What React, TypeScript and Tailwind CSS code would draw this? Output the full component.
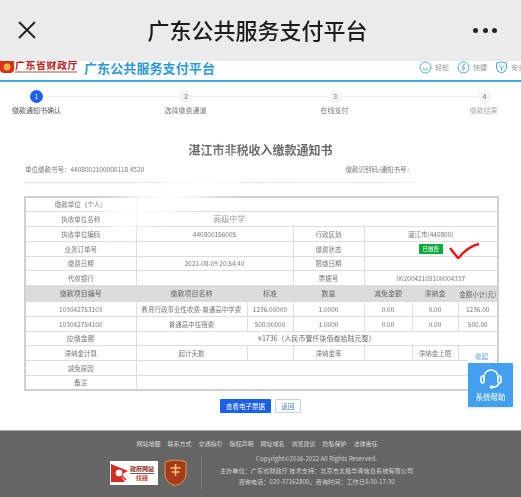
import React from "react";

const cjk = { fontFamily: '"Noto Sans CJK SC", "Liberation Sans", sans-serif' };

const td = "border border-[#dedede] p-0 text-center align-middle font-normal";

function Step({ n, active }: { n: number; active?: boolean }) {
  return (
    <div
      className={
        active
          ? "flex h-[13px] w-[13px] shrink-0 items-center justify-center rounded-full bg-[#1d63ea] text-[6px] text-white"
          : "flex h-[13px] w-[13px] shrink-0 items-center justify-center rounded-full bg-[#f4f4f4] text-[7px] text-[#777]"
      }
    >
      {n}
    </div>
  );
}

function Line() {
  return <div className="h-px flex-1 bg-[#f0f0f0]" />;
}

function Perk({ icon, label }: { icon: React.ReactNode; label: string }) {
  return (
    <div className="flex w-[38px] shrink-0 items-center gap-[3px]">
      {icon}
      <span className="whitespace-nowrap text-[7px] text-[#9a9a9a]">{label}</span>
    </div>
  );
}

export default function App() {
  return (
    <div className="h-[497px] w-[521px] overflow-hidden bg-white" style={cjk}>
      {/* app bar */}
      <div className="flex h-[61px] items-center bg-[#ebebeb] pb-[1px] pl-[18px] pr-[24px] blur-[0.3px]">
        <svg width="18" height="18" viewBox="0 0 18 18" className="shrink-0">
          <path d="M1 1 L17 17 M17 1 L1 17" stroke="#222" strokeWidth="1.9" fill="none" />
        </svg>
        <div className="flex-1 pb-[2px] pl-[6px] text-center text-[22px] font-medium leading-none text-[#1d1d1d]">
          广东公共服务支付平台
        </div>
        <div className="flex w-[24px] shrink-0 justify-between">
          <span className="h-[5px] w-[5px] rounded-full bg-[#222]" />
          <span className="h-[5px] w-[5px] rounded-full bg-[#222]" />
          <span className="h-[5px] w-[5px] rounded-full bg-[#222]" />
        </div>
      </div>

      <div className="relative h-[436px] overflow-hidden blur-[0.55px]">
        {/* site header */}
        <div className="flex h-[19px] items-center overflow-hidden bg-white pb-[7px]">
          <svg width="14" height="14" viewBox="0 0 14 14" className="shrink-0">
            <path d="M0 0 H14 V9 Q14 13 10 13 H4 Q0 13 0 9 Z" fill="#d8301c" />
            <circle cx="7" cy="7" r="3.5" fill="#f3b23a" />
          </svg>
          <div className="ml-[1px] flex w-[64px] shrink-0 flex-col">
            <span
              className="whitespace-nowrap text-[10px] font-bold leading-[8px] tracking-[0.5px] text-[#b8201c]"
              style={{ fontFamily: '"Noto Sans CJK SC", serif' }}
            >
              广东省财政厅
            </span>
            <div className="mt-[2px] h-[2px] w-[62px] bg-[#c9a9a4]" />
          </div>
          <div className="ml-[5px] whitespace-nowrap text-[13px] font-bold leading-none tracking-[0.1px] text-[#2b9ad6]">
            广东公共服务支付平台
          </div>
          <div className="ml-auto -mr-[12px] flex">
            <Perk
              icon={
                <svg width="13" height="13" viewBox="0 0 13 13" fill="none" stroke="#4aa6dc" strokeWidth="1">
                  <circle cx="6.5" cy="6.5" r="5.5" />
                  <path d="M4 7.5 Q6.5 10 9 7.5" />
                </svg>
              }
              label="轻松"
            />
            <Perk
              icon={
                <svg width="13" height="13" viewBox="0 0 13 13" fill="none" stroke="#4aa6dc" strokeWidth="1">
                  <circle cx="6.5" cy="6.5" r="5.5" />
                  <path d="M7.5 3 L5 7 H8 L5.5 10" />
                </svg>
              }
              label="快捷"
            />
            <Perk
              icon={
                <svg width="13" height="13" viewBox="0 0 13 13" fill="none" stroke="#4aa6dc" strokeWidth="1">
                  <path d="M1.5 2 L6.5 1 L11.5 2 V7 Q11 11 6.5 12 Q2 11 1.5 7 Z" />
                  <path d="M4 4.5 L6.5 7 L9 4.5 M6.5 7 V10" />
                </svg>
              }
              label="安全"
            />
          </div>
        </div>
        <div className="h-[2px] bg-[#3fa9e1]" />

        {/* stepper */}
        <div className="mt-[8px] flex items-center px-[30px]">
          <Step n={1} active />
          <Line />
          <Step n={2} />
          <Line />
          <Step n={3} />
          <Line />
          <Step n={4} />
        </div>
        <div className="-ml-[38px] mt-[1px] grid w-[596px] grid-cols-4 text-center text-[7px] leading-[12px] text-[#777]">
          <span className="text-[#555]">缴款通知书确认</span>
          <span>选择缴费通道</span>
          <span>在线支付</span>
          <span className="text-[#aaa]">缴款结果</span>
        </div>

        {/* notice */}
        <div className="mt-[26px] text-center text-[12px] font-bold leading-[16px] text-[#6a6a6a]">
          湛江市非税收入缴款通知书
        </div>
        <div className="mt-[7px] flex justify-between pl-[25px] pr-[108px] text-[6.5px] leading-[9px] text-[#777]">
          <span>单位缴款书号：4408002100000118 4520</span>
          <span>缴款识别码/通知书号：</span>
        </div>
        <div className="ml-[24px] mt-[8px] h-px w-[392px] bg-gradient-to-r from-[#cfe7ef] via-[#cfe7ef] to-[#e4f1f5]" />

        {/* table */}
        <table className="ml-[24px] mt-[13px] w-[473px] table-fixed border-collapse border-2 border-[#d0d0d0] text-[6.5px] leading-none text-[#777]">
          <colgroup>
            <col className="w-[111px]" />
            <col className="w-[111px]" />
            <col className="w-[46px]" />
            <col className="w-[71px]" />
            <col className="w-[48px]" />
            <col className="w-[46px]" />
            <col className="w-[40px]" />
          </colgroup>
          <tbody>
            <tr className="h-[14.8px]">
              <td className={td}>缴款单位（个人）</td>
              <td className={td} colSpan={6}></td>
            </tr>
            <tr className="h-[14.8px]">
              <td className={td}>执收单位名称</td>
              <td className={td} colSpan={6}>
                <div className="-ml-[175px] text-[8px] text-[#999]">高级中学</div>
              </td>
            </tr>
            <tr className="h-[14.8px]">
              <td className={td}>执收单位编码</td>
              <td className={td} colSpan={2}>440800156005</td>
              <td className={td}>行政区划</td>
              <td className={td} colSpan={3}>湛江市(440800)</td>
            </tr>
            <tr className="h-[14.8px]">
              <td className={td}>业务订单号</td>
              <td className={td} colSpan={2}></td>
              <td className={td}>缴费状态</td>
              <td className={td} colSpan={3}>
                <span className="inline-block h-[10px] w-[24px] bg-[#0bab3d] text-center text-[5.5px] leading-[10px] text-white">
                  已缴费
                </span>
              </td>
            </tr>
            <tr className="h-[14.8px]">
              <td className={td}>缴费日期</td>
              <td className={td} colSpan={2}>2021-08-09 20:54:40</td>
              <td className={td}>限缴日期</td>
              <td className={td} colSpan={3}></td>
            </tr>
            <tr className="h-[14.8px]">
              <td className={td}>代收银行</td>
              <td className={td} colSpan={2}></td>
              <td className={td}>票据号</td>
              <td className={td} colSpan={3}>0020042105100004337</td>
            </tr>
            <tr className="h-[16px] bg-[#dcdcdc] text-[7px] text-[#666]">
              <th className={td}>缴款项目编号</th>
              <th className={td}>缴款项目名称</th>
              <th className={td}>标准</th>
              <th className={td}>数量</th>
              <th className={td}>减免金额</th>
              <th className={td}>滞纳金</th>
              <th className={td + " whitespace-nowrap text-[6.5px]"}>金额小计(元)</th>
            </tr>
            <tr className="h-[14.7px]">
              <td className={td}>103042753103</td>
              <td className={td + " whitespace-nowrap"}>教育行政事业性收费-普通高中学费</td>
              <td className={td}>1236.00000</td>
              <td className={td}>1.0000</td>
              <td className={td}>0.00</td>
              <td className={td}>0.00</td>
              <td className={td}>1236.00</td>
            </tr>
            <tr className="h-[14.7px]">
              <td className={td}>103042754100</td>
              <td className={td}>普通高中住宿费</td>
              <td className={td}>500.00000</td>
              <td className={td}>1.0000</td>
              <td className={td}>0.00</td>
              <td className={td}>0.00</td>
              <td className={td}>500.00</td>
            </tr>
            <tr className="h-[14.7px]">
              <td className={td + " text-[7px] font-medium"}>应缴金额</td>
              <td className={td + " text-[7px] text-[#666]"} colSpan={6}>
                ¥1736（人民币壹仟柒佰叁拾陆元整）
              </td>
            </tr>
            <tr className="h-[14.7px]">
              <td className={td}>滞纳金计算</td>
              <td className={td}>起计天数</td>
              <td className={td}></td>
              <td className={td}>滞纳金率</td>
              <td className={td}></td>
              <td className={td + " whitespace-nowrap"}>滞纳金上限</td>
              <td className={td}></td>
            </tr>
            <tr className="h-[14.7px]">
              <td className={td}>减免原因</td>
              <td className={td} colSpan={6}></td>
            </tr>
            <tr className="h-[14.7px]">
              <td className={td}>备注</td>
              <td className={td} colSpan={6}></td>
            </tr>
          </tbody>
        </table>

        {/* actions */}
        <div className="ml-[220px] mt-[8px] flex gap-[4px]">
          <button className="h-[14px] w-[51px] rounded-[1px] bg-[#1b5fe6] text-[6.5px] leading-none text-white">
            查看电子票据
          </button>
          <button className="h-[14px] w-[26px] rounded-[1px] border border-[#c5d3e6] bg-white text-[6.5px] leading-none text-[#3f7fd0]">
            返回
          </button>
        </div>

        {/* footer */}
        <div className="absolute inset-x-0 bottom-0 h-[67px] border-t border-[#a8a8a8] bg-[#656565]">
          <div className="mt-[8px] flex justify-center gap-[7px] pr-[7px] text-[6px] leading-[9px] text-[#d8d8d8]">
            <span>网站地图</span>
            <span>联系方式</span>
            <span>交通指引</span>
            <span>版权声明</span>
            <span>网址域名</span>
            <span>浏览建议</span>
            <span>隐私保护</span>
            <span>法律责任</span>
          </div>
          <div className="mt-[8px] flex items-start pl-[110px]">
            <div className="mt-[5px] flex h-[24px] w-[48px] shrink-0 items-center bg-white px-[1px]">
              <svg width="18" height="20" viewBox="0 0 18 20" className="shrink-0">
                <path d="M0 1 L17 8 L9 12 L14 19 H0 Z" fill="#d62b20" />
                <circle cx="8" cy="10" r="4" fill="#fff" stroke="#d62b20" strokeWidth="1" />
                <path d="M11 13 L15 17" stroke="#d62b20" strokeWidth="1.6" />
              </svg>
              <div className="ml-[1px] flex flex-col items-center leading-none">
                <span className="whitespace-nowrap border-b border-[#666] pb-[1px] text-[6px] font-bold text-[#8a2a25]">
                  政府网站
                </span>
                <span className="mt-[1px] text-[6px] font-bold text-[#c83a30]">找错</span>
              </div>
            </div>
            <svg width="23" height="27" viewBox="0 0 23 27" className="ml-[6px] mt-[3px] shrink-0">
              <path d="M1 3 Q11.5 -1 22 3 V16 Q21 24 11.5 26.5 Q2 24 1 16 Z" fill="#a83a1c" stroke="#d99a52" strokeWidth="1" />
              <path d="M11.5 5 V17 M6.5 9 H16.5 M7.5 13 H15.5" stroke="#f0c36a" strokeWidth="1.6" fill="none" />
            </svg>
            <div className="ml-[14px] h-[34px] w-px shrink-0 bg-[#767676]" />
            <div className="-mt-[3px] ml-[11px] flex w-[207px] shrink-0 flex-col items-center whitespace-nowrap text-[6.2px] leading-[11.5px] text-[#d0d0d0]">
              <span>Copyright©2016-2022 All Rights Reserved.</span>
              <span>主办单位：广东省财政厅 技术支持：北京市太极华青信息系统有限公司</span>
              <span>咨询电话：020-37162800。咨询时间：工作日8:30-17:30</span>
            </div>
          </div>
        </div>

        {/* privacy smudges */}
        <div className="absolute left-[105px] top-[117px] h-[32px] w-[140px] -rotate-[22deg] bg-white/90 blur-[7px]" />
        <div className="absolute left-[418px] top-[99px] h-[26px] w-[85px] bg-white/95 blur-[4px]" />

        {/* red tick */}
        <svg width="34" height="18" viewBox="0 0 34 18" className="absolute left-[448px] top-[181px]">
          <path d="M2 6 Q6 11 10 16 Q11 16 14 12 Q22 4 31 2" stroke="#ee1111" strokeWidth="2.4" fill="none" />
        </svg>

        {/* help widget */}
        <div className="absolute left-[468px] top-[290px] w-[45px]">
          <div className="flex h-[12px] w-[27px] items-center justify-center bg-white text-[6.5px] text-[#5a9fdc]">
            收起
          </div>
          <div className="flex h-[44px] flex-col items-center rounded-[1px] bg-[#42a0ee] pt-[6px] shadow-sm">
            <svg width="24" height="20" viewBox="0 0 24 20" fill="none" stroke="#fff" strokeWidth="1.6">
              <path d="M5 11 V8 A7 7 0 0 1 19 8 V11" />
              <rect x="2" y="7" width="3" height="7" rx="1.5" />
              <rect x="19" y="7" width="3" height="7" rx="1.5" />
              <path d="M20 14 Q19 18 14 18" />
              <circle cx="12.5" cy="18" r="1" fill="#fff" />
            </svg>
            <span className="mt-[3px] whitespace-nowrap text-[7.5px] leading-[9px] text-white">系统帮助</span>
          </div>
        </div>
      </div>
    </div>
  );
}
